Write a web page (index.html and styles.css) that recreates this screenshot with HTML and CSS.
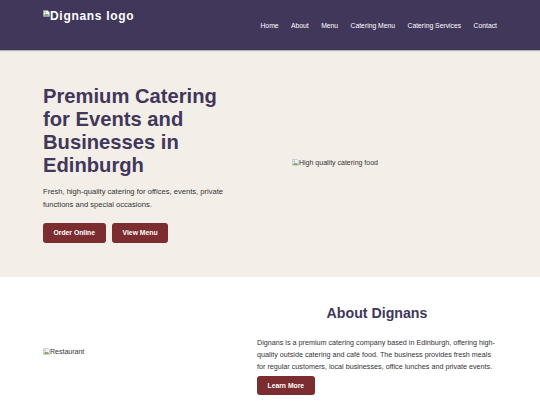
FILE: index.html
```html
<!DOCTYPE html>
<html>
<head>
<meta charset="utf-8"/>
<title>Dignans Catering</title>
<link rel="stylesheet" href="styles.css">
</head>
<body>
<header class="site-header">
  <div class="container header-inner">
    <a class="logo" href="#"><svg class="broken" viewBox="0 0 16 16"><path d="M1 1h10l4 4v10H1z" fill="#f4f4f4" stroke="#999"/><path d="M2 13l4-5 3 3 2-2 3 4z" fill="#5a9a3a"/><circle cx="5" cy="5" r="1.6" fill="#6aa0d8"/></svg>Dignans logo</a>
    <nav class="main-nav">
      <a href="#">Home</a>
      <a href="#">About</a>
      <a href="#">Menu</a>
      <a href="#">Catering Menu</a>
      <a href="#">Catering Services</a>
      <a href="#">Contact</a>
    </nav>
  </div>
</header>

<section class="hero">
  <div class="container hero-grid">
    <div class="hero-text">
      <h1>Premium Catering for Events and Businesses in Edinburgh</h1>
      <p>Fresh, high-quality catering for offices, events, private functions and special occasions.</p>
      <div class="btn-row">
        <a class="btn" href="#">Order Online</a>
        <a class="btn" href="#">View Menu</a>
      </div>
    </div>
    <div class="hero-img">
      <span class="alt"><svg class="broken" viewBox="0 0 16 16"><path d="M1 1h10l4 4v10H1z" fill="#f4f4f4" stroke="#999"/><path d="M2 13l4-5 3 3 2-2 3 4z" fill="#5a9a3a"/><circle cx="5" cy="5" r="1.6" fill="#6aa0d8"/></svg>High quality catering food</span>
    </div>
  </div>
</section>

<section class="about">
  <div class="container about-grid">
    <div class="about-img">
      <span class="alt"><svg class="broken" viewBox="0 0 16 16"><path d="M1 1h10l4 4v10H1z" fill="#f4f4f4" stroke="#999"/><path d="M2 13l4-5 3 3 2-2 3 4z" fill="#5a9a3a"/><circle cx="5" cy="5" r="1.6" fill="#6aa0d8"/></svg>Restaurant</span>
    </div>
    <div class="about-text">
      <h2>About Dignans</h2>
      <p>Dignans is a premium catering company based in Edinburgh, offering high-quality outside catering and café food. The business provides fresh meals for regular customers, local businesses, office lunches and private events.</p>
      <a class="btn" href="#">Learn More</a>
    </div>
  </div>
</section>
</body>
</html>
```

FILE: styles.css
```css
html, body { margin: 0; padding: 0; }
body { font-family: "Liberation Sans", Arial, sans-serif; color: #333; background: #fff; }
a { text-decoration: none; }

.container { width: 454px; margin: 0 auto; }

.site-header {
  background-color: #41375a; height: 50px;
  box-shadow: 0 1px 1px rgba(0,0,0,0.25);
  position: relative;
}
.header-inner { display: flex; justify-content: space-between; height: 50px; }
.logo {
  color: #fff; font-weight: bold; font-size: 12px; letter-spacing: 0.7px;
  padding-top: 9px; display: flex; align-items: flex-start; line-height: 14px;
}
.logo .broken { width: 7px; height: 7px; margin-top: 1px; }
.main-nav { display: flex; align-items: center; gap: 12.4px; }
.main-nav a { color: #fff; font-size: 6.8px; }

.hero { background-color: #f3efe8; padding: 35px 0 34px; }
.hero-grid { display: grid; grid-template-columns: 200px 1fr; column-gap: 49px; align-items: center; }
.hero-text h1 {
  margin: 0; color: #41375a; font-size: 20.2px; line-height: 23px; font-weight: bold;
}
.hero-text p { margin: 9px 0 12px; font-size: 7.6px; line-height: 12.7px; color: #333; }
.btn-row { display: flex; gap: 6.5px; }
.btn {
  display: inline-block; background-color: #7b2d30; color: #fff; font-weight: bold;
  font-size: 6.8px; line-height: 8px; padding: 5.6px 10.5px; border-radius: 3px;
}

.alt { font-size: 7px; color: #333; display: inline-flex; align-items: center; }
.broken { width: 7px; height: 7px; flex: none; }
.hero-img { margin-top: -6px; }

.about { padding: 28px 0 20px; }
.about-grid { display: grid; grid-template-columns: 200px 1fr; column-gap: 14px; align-items: center; }
.about-text h2 {
  margin: 0 0 15px; text-align: center; color: #41375a; font-size: 14.2px; line-height: 17px;
}
.about-text p { margin: 0; font-size: 7.2px; line-height: 12.4px; color: #333; }
```
